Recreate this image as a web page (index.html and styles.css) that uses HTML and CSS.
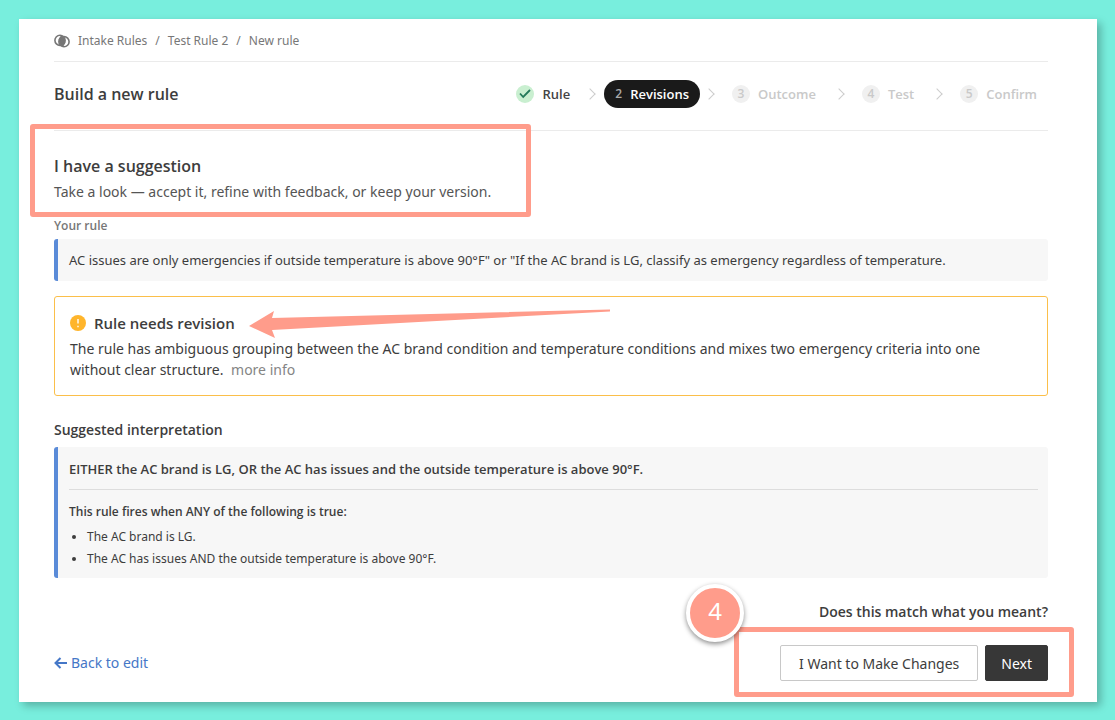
FILE: index.html
```
<!DOCTYPE html>
<html lang="en">
<head>
    <meta charset="UTF-8">
    <meta name="viewport" content="width=device-width, initial-scale=1.0">
    <title>New rule - Intake Rules</title>
    <link rel="stylesheet" href="styles.css">
</head>
<body>
    <main class="page">
        <nav class="breadcrumb" aria-label="Breadcrumb">
            <svg class="breadcrumb-icon" viewBox="0 0 16 14" aria-hidden="true">
                <path d="M7.2 2.6a5.3 5.3 0 0 1 1.8 8.8a5.3 5.3 0 0 1-1.8-8.8z" fill="#777"/>
                <circle cx="6" cy="6.3" r="5.1"/>
                <circle cx="10" cy="7.7" r="5.1"/>
            </svg>
            <a href="#">Intake Rules</a>
            <span>/</span>
            <a href="#">Test Rule 2</a>
            <span>/</span>
            <span>New rule</span>
        </nav>

        <header class="header">
            <h1>Build a new rule</h1>
            <ol class="steps">
                <li class="step done">
                    <span class="number">
                        <svg viewBox="0 0 12 12" aria-hidden="true"><path d="M1 5.5l3.2 3.5L11 2"/></svg>
                    </span>
                    Rule
                </li>
                <li class="step active"><span class="number">2</span>Revisions</li>
                <li class="step"><span class="number">3</span>Outcome</li>
                <li class="step"><span class="number">4</span>Test</li>
                <li class="step"><span class="number">5</span>Confirm</li>
            </ol>
        </header>

        <section class="intro">
            <h2>I have a suggestion</h2>
            <p>Take a look — accept it, refine with feedback, or keep your version.</p>
            <div class="highlight"></div>
        </section>

        <section class="your-rule">
            <h3>Your rule</h3>
            <p class="quote">AC issues are only emergencies if outside temperature is above 90°F" or "If the AC brand is LG, classify as emergency regardless of temperature.</p>
        </section>

        <section class="alert">
            <h3>
                <svg class="alert-icon" viewBox="0 0 16 16" aria-hidden="true">
                    <circle cx="8" cy="8" r="8" fill="#ffb52b"/>
                    <path d="M8 4v4.6M8 10.8v1.4" stroke="#fff" stroke-width="1.4"/>
                </svg>
                Rule needs revision
            </h3>
            <p>The rule has ambiguous grouping between the AC brand condition and temperature conditions and mixes two emergency criteria into one without clear structure. <a href="#">more info</a></p>
            <svg class="arrow" viewBox="0 0 364 32" aria-hidden="true">
                <path d="M1 17L26 2L24 9L362 0.5V2.5L24 21L27 29z"/>
            </svg>
        </section>

        <section class="suggested">
            <h3>Suggested interpretation</h3>
            <div class="quote">
                <p class="summary">EITHER the AC brand is LG, OR the AC has issues and the outside temperature is above 90°F.</p>
                <p class="condition">This rule fires when ANY of the following is true:</p>
                <ul>
                    <li>The AC brand is LG.</li>
                    <li>The AC has issues AND the outside temperature is above 90°F.</li>
                </ul>
            </div>
        </section>

        <footer class="footer">
            <p>Does this match what you meant?</p>
            <div class="footer-row">
                <a class="back" href="#">
                    <svg viewBox="0 0 14 12" aria-hidden="true"><path d="M13 6H2M6.5 1L1.5 6l5 5"/></svg>
                    Back to edit
                </a>
                <div class="buttons">
                    <button type="button" class="btn">I Want to Make Changes</button>
                    <button type="button" class="btn btn-dark">Next</button>
                    <div class="highlight"></div>
                    <div class="badge">4</div>
                </div>
            </div>
        </footer>
    </main>
</body>
</html>
```
FILE: styles.css
```
* {
    box-sizing: border-box;
}
body {
    margin: 0;
    padding: 19px 18px 18px 19px;
    background-color: #78eedd;
    color: #3d3d3d;
    font-family: "Noto Sans", "Open Sans", sans-serif;
    font-size: 14px;
    line-height: 22px;
}
h1, h2, h3, p, ul, ol {
    margin: 0;
    padding: 0;
}
h1, h2, h3, .steps, .summary, .condition, .footer p {
    font-family: "Open Sans", "Noto Sans", sans-serif;
    font-weight: 600;
}
a {
    color: inherit;
    text-decoration: none;
}
.page {
    padding: 0 49px 21px 35px;
    background-color: #fff;
    box-shadow: 4px 4px 8px rgba(0, 0, 0, 0.25);
}

/* Breadcrumb */
.breadcrumb {
    display: flex;
    align-items: center;
    gap: 8px;
    height: 43px;
    padding-top: 1px;
    border-bottom: 1px solid #ebebeb;
    color: #777;
    font-size: 12px;
}
.breadcrumb-icon {
    width: 16px;
    height: 14px;
    fill: none;
    stroke: #777;
    stroke-width: 1.6;
}

/* Header and steps */
.header {
    display: flex;
    justify-content: space-between;
    align-items: center;
    height: 69px;
    padding-bottom: 5px;
    border-bottom: 1px solid #ebebeb;
}
h1 {
    font-size: 16px;
}
.steps {
    display: flex;
    align-items: center;
    list-style: none;
}
.step {
    display: flex;
    align-items: center;
    gap: 8px;
    padding: 0 8px 0 11px;
    color: #c9c9c9;
    font-size: 13px;
    line-height: 28px;
}
.step:last-child {
    padding-right: 11px;
}
.step + .step::before {
    content: "";
    width: 7px;
    height: 7px;
    margin-right: 11px;
    border: solid #ccc;
    border-width: 1px 1px 0 0;
    transform: rotate(45deg);
}
.number {
    display: flex;
    justify-content: center;
    align-items: center;
    width: 18px;
    height: 18px;
    border-radius: 50%;
    background-color: #f0f0f0;
    font-size: 12px;
}
.step.done {
    color: #444;
}
.done .number {
    background-color: #c9efd0;
}
.done svg {
    width: 12px;
    height: 12px;
    fill: none;
    stroke: #23795a;
    stroke-width: 1.8;
}
.step.active {
    position: relative;
    margin-left: 26px;
    padding-right: 11px;
    border-radius: 14px;
    background-color: #1a1a1a;
    color: #fff;
}
.step.active::before {
    position: absolute;
    left: -18px;
}
.active + .step {
    padding-left: 5px;
}
.active .number {
    width: 7px;
    background: none;
    color: #aaa;
}

/* Annotations */
.highlight {
    position: absolute;
    border: 5px solid #ff9c8b;
    border-radius: 3px;
    pointer-events: none;
}
.arrow {
    position: absolute;
    top: 12px;
    left: 193px;
    width: 364px;
    height: 32px;
    fill: #ff9c8b;
}
.badge {
    position: absolute;
    top: -61px;
    left: -94px;
    width: 58px;
    height: 58px;
    border: 4px solid #fff;
    border-radius: 50%;
    background-color: #ff9c8b;
    box-shadow: 0 2px 5px rgba(0, 0, 0, 0.45);
    color: #fff;
    font-size: 24px;
    line-height: 46px;
    text-align: center;
}

/* Content */
.intro {
    position: relative;
    padding-top: 24px;
}
.intro h2 {
    font-size: 16px;
}
.intro p {
    margin-top: 4px;
    color: #555;
}
.intro .highlight {
    top: -7px;
    left: -24px;
    width: 501px;
    height: 93px;
}
.your-rule {
    margin-top: 12px;
}
.your-rule h3 {
    color: #777;
    font-size: 12px;
}
.quote {
    border-left: 4px solid #5a8bd8;
    border-radius: 3px;
    background-color: #f7f7f7;
}
.your-rule .quote {
    margin-top: 2px;
    padding: 10px 11px;
    font-size: 13px;
}
.alert {
    position: relative;
    margin-top: 15px;
    padding: 15px 40px 15px 15px;
    border: 1px solid #fbbf4a;
    border-radius: 3px;
}
.alert h3 {
    display: flex;
    align-items: center;
    gap: 8px;
    font-size: 15px;
}
.alert-icon {
    width: 16px;
    height: 16px;
}
.alert p {
    margin-top: 4px;
    line-height: 21px;
}
.alert a {
    margin-left: 4px;
    color: #858585;
}
.suggested {
    margin-top: 23px;
}
.suggested h3 {
    font-size: 14px;
}
.suggested .quote {
    margin-top: 6px;
    padding: 11px 10px 8px 11px;
}
.summary {
    padding-bottom: 9px;
    border-bottom: 1px solid #ddd;
    font-size: 13px;
}
.condition {
    margin-top: 11px;
    font-size: 12px;
}
.quote ul {
    margin-top: 3px;
    padding-left: 18px;
    font-size: 12px;
}

/* Footer */
.footer {
    margin-top: 23px;
}
.footer p {
    text-align: right;
}
.footer-row {
    display: flex;
    justify-content: space-between;
    align-items: center;
    margin-top: 22px;
}
.back {
    display: flex;
    align-items: center;
    gap: 3px;
    color: #4577c7;
}
.back svg {
    width: 14px;
    height: 12px;
    fill: none;
    stroke: #4577c7;
    stroke-width: 2;
}
.buttons {
    position: relative;
    display: flex;
    gap: 7px;
}
.buttons .highlight {
    top: -18px;
    right: -26px;
    bottom: -16px;
    left: -46px;
}
.btn {
    height: 36px;
    padding: 0 18px;
    border: 1px solid #c8c8c8;
    border-radius: 2px;
    background-color: #fff;
    color: #3d3d3d;
    font-family: inherit;
    font-size: 14px;
}
.btn-dark {
    padding: 0 15px;
    border-color: #373737;
    background-color: #373737;
    color: #fff;
}
```
